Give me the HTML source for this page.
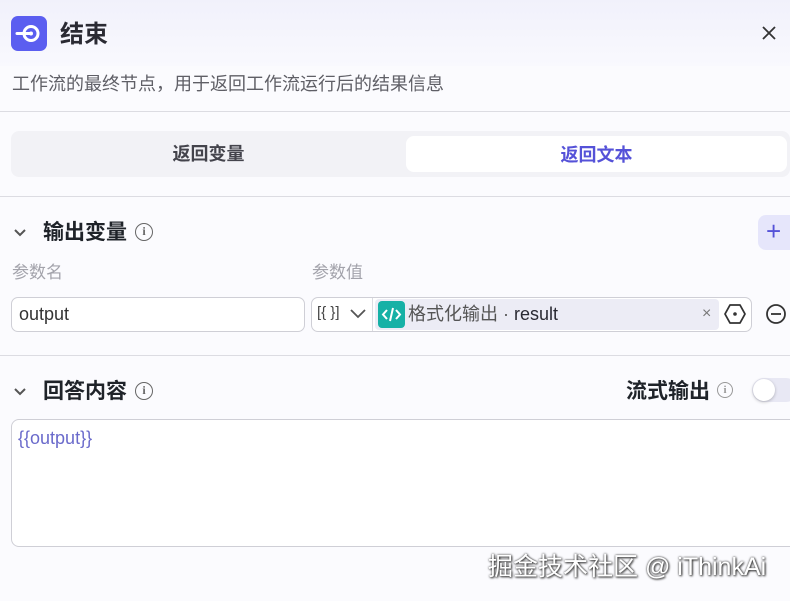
<!DOCTYPE html>
<html><head><meta charset="utf-8">
<style>
*{margin:0;padding:0;box-sizing:border-box}
body{width:790px;height:601px;overflow:hidden;background:#fbfbfe;font-family:"Liberation Sans","Noto Sans CJK SC",sans-serif;position:relative;color:#1f2329}
.a{position:absolute;line-height:1.2}
.hdr{left:0;top:0;width:790px;height:66px;background:linear-gradient(#f1f1fb,#f9f9fe)}
.line{left:0;width:790px;height:1px;background:#dcdce2}
.sec{font-size:21px;font-weight:bold;color:#1f2329}
.info{width:18px;height:18px;border:1.5px solid #666;border-radius:50%;font-size:12px;text-align:center;line-height:15px;color:#666;font-family:"Liberation Serif",serif;font-weight:bold}
.lbl{font-size:17px;color:#a3a3ab}
</style></head><body>
<div class="a hdr"></div>
<div class="a" style="left:11px;top:16px;width:36px;height:35px;background:#5b5ef0;border-radius:7px">
<svg width="36" height="35" viewBox="0 0 36 35"><circle cx="20" cy="17.5" r="7" fill="none" stroke="#fff" stroke-width="3"/><line x1="6" y1="17.5" x2="20" y2="17.5" stroke="#fff" stroke-width="3" stroke-linecap="round"/><circle cx="20" cy="17.5" r="2" fill="#fff"/></svg></div>
<div class="a" style="left:60px;top:21px;font-size:24px;font-weight:bold;color:#2a2a33">结束</div>
<svg class="a" style="left:761px;top:25px" width="16" height="16"><path d="M2 2L14 14M14 2L2 14" stroke="#333" stroke-width="1.8"/></svg>
<div class="a" style="left:12px;top:74px;font-size:18px;color:#5f5f66">工作流的最终节点，用于返回工作流运行后的结果信息</div>
<div class="a line" style="top:111px"></div>
<div class="a" style="left:11px;top:131px;width:779px;height:46px;background:#f2f2f6;border-radius:8px"></div>
<div class="a" style="left:11px;top:144px;width:395px;text-align:center;font-size:18px;font-weight:bold;color:#44444c">返回变量</div>
<div class="a" style="left:406px;top:136px;width:381px;height:36px;background:#fff;border-radius:8px;text-align:center;line-height:38px;font-size:18px;font-weight:bold;color:#5552d8">返回文本</div>
<div class="a line" style="top:196px"></div>
<svg class="a" style="left:13px;top:228px" width="14" height="10"><path d="M2 2L7 7L12 2" stroke="#555" stroke-width="2" fill="none"/></svg>
<div class="a sec" style="left:43px;top:220px">输出变量</div>
<div class="a info" style="left:135px;top:223px">i</div>
<div class="a" style="left:758px;top:215px;width:40px;height:35px;background:#e6e6fb;border-radius:8px;color:#5552d8;font-size:26px;line-height:33px;padding-left:8px">+</div>
<div class="a lbl" style="left:12px;top:263px">参数名</div>
<div class="a lbl" style="left:312px;top:263px">参数值</div>
<div class="a" style="left:11px;top:297px;width:294px;height:35px;border:1px solid #cfcfd6;border-radius:7px;background:#fff;font-size:18px;line-height:33px;padding-left:7px;color:#333">output</div>
<div class="a" style="left:311px;top:297px;width:441px;height:35px;border:1px solid #cfcfd6;border-radius:7px;background:#fff"></div>
<div class="a" style="left:372px;top:298px;width:1px;height:33px;background:#dcdce2"></div>
<div class="a" style="left:317px;top:304px;font-size:15px;color:#444">[{ }]</div>
<svg class="a" style="left:349px;top:308px" width="18" height="12"><path d="M2 2L9 9L16 2" stroke="#555" stroke-width="1.8" fill="none"/></svg>
<div class="a" style="left:375px;top:299px;width:344px;height:31px;background:#ececf5;border-radius:4px"></div>
<div class="a" style="left:378px;top:301px;width:27px;height:27px;background:#16b1a6;border-radius:4px">
<svg width="27" height="27"><path d="M9 9L5 13.5L9 18M18 9L22 13.5L18 18M15 7L12 20" stroke="#fff" stroke-width="2" fill="none"/></svg></div>
<div class="a" style="left:408px;top:304px;font-size:18px;color:#555"><span>格式化输出 · </span><span style="color:#2a2a33">result</span></div>
<div class="a" style="left:702px;top:304px;font-size:16px;color:#777">×</div>
<svg class="a" style="left:723px;top:302px" width="24" height="24"><path d="M7 3H17L22 12L17 21H7L2 12Z" stroke="#333" stroke-width="1.8" fill="none" stroke-linejoin="round"/><circle cx="12" cy="12" r="1.8" fill="#333"/></svg>
<svg class="a" style="left:765px;top:303px" width="22" height="22"><circle cx="11" cy="11" r="9" stroke="#333" stroke-width="1.8" fill="none"/><line x1="6" y1="11" x2="16" y2="11" stroke="#333" stroke-width="1.8"/></svg>
<div class="a line" style="top:355px"></div>
<svg class="a" style="left:13px;top:387px" width="14" height="10"><path d="M2 2L7 7L12 2" stroke="#555" stroke-width="2" fill="none"/></svg>
<div class="a sec" style="left:43px;top:379px">回答内容</div>
<div class="a info" style="left:135px;top:382px">i</div>
<div class="a sec" style="left:626px;top:379px">流式输出</div>
<div class="a info" style="left:717px;top:382px;border-color:#999;color:#999;border-width:1px;width:16px;height:16px;line-height:14px;font-size:11px">i</div>
<div class="a" style="left:752px;top:378px;width:46px;height:24px;background:#e8e8f4;border-radius:12px"></div>
<div class="a" style="left:753px;top:379px;width:22px;height:22px;background:#fff;border-radius:50%;box-shadow:0 1px 3px rgba(0,0,0,.25)"></div>
<div class="a" style="left:11px;top:419px;width:790px;height:128px;border:1px solid #cfcfd6;border-radius:8px;background:#fff"></div>
<div class="a" style="left:18px;top:428px;font-size:18px;color:#6a6acb">{{output}}</div>
<div class="a" style="left:488px;top:552px;font-size:25px;color:#fff;text-shadow:0 0 2px #333,1px 1px 2px #333">掘金技术社区 @ iThinkAi</div>
</body></html>
